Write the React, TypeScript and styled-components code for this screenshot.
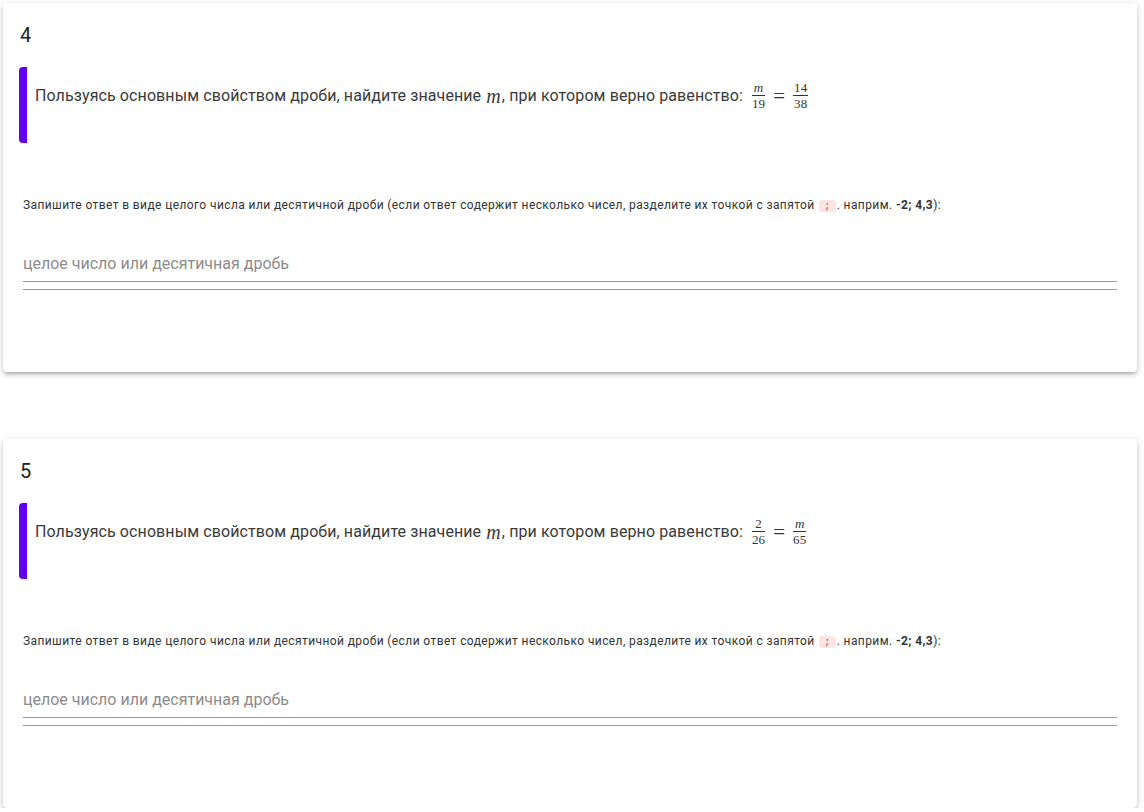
import React from "react";
import styled, { createGlobalStyle } from "styled-components";

const Global = createGlobalStyle`
  html, body { margin: 0; padding: 0; background: #fff; }
  body { font-family: Roboto, "Noto Sans", Arial, sans-serif; }
`;

const Page = styled.div`
  display: flex;
  flex-direction: column;
  gap: 67px;
  padding: 3px 7px 0 3px;
`;

const Card = styled.section`
  background: #fff;
  border-radius: 4px;
  box-shadow: 0 3px 3px -2px rgba(0,0,0,0.2), 0 3px 4px 0 rgba(0,0,0,0.14), 0 1px 8px 0 rgba(0,0,0,0.12);
  height: 369px;
  box-sizing: border-box;
  padding: 20px 20px 0 16px;
  display: flex;
  flex-direction: column;
`;

const Num = styled.div`
  font-size: 20px;
  line-height: 24px;
  color: #212121;
  padding-left: 1px;
`;

const Statement = styled.div`
  margin-top: 20px;
  border-left: 8px solid #6200ea;
  border-radius: 4px;
  height: 76px;
  box-sizing: border-box;
  padding: 15px 0 0 8px;
  font-size: 16px;
  line-height: 28px;
  letter-spacing: 0.1px;
  color: #3a3a3a;
  display: flex;
  align-self: flex-start;
  align-items: flex-start;
`;

const MathVar = styled.span`
  font-family: "Liberation Serif", "DejaVu Serif", serif;
  font-style: italic;
  font-size: 20px;
  margin: 0 1px;
`;

const MathBox = styled.span`
  display: inline-flex;
  align-items: center;
  margin-left: 8px;
  font-family: "Liberation Serif", "DejaVu Serif", serif;
  color: #333;
  height: 28px;
`;

const Frac = styled.span`
  display: inline-flex;
  flex-direction: column;
  align-items: center;
  font-size: 13px;
  line-height: 12px;
  padding: 0 1px;
`;

const FracTop = styled.span<{ $italic?: boolean }>`
  font-style: ${(p) => (p.$italic ? "italic" : "normal")};
  padding: 0 1px 1px;
  align-self: stretch;
  text-align: center;
  border-bottom: 1px solid #333;
`;

const FracBottom = styled.span`
  padding-top: 2px;
`;

const Eq = styled.span`
  font-size: 21px;
  margin: 0 7px;
  line-height: 1;
`;

const Hint = styled.div`
  margin-top: 54px;
  padding-left: 4px;
  font-size: 12px;
  line-height: 16px;
  color: #333;
  letter-spacing: 0.4px;
`;

const Code = styled.code`
  font-family: "Liberation Mono", monospace;
  font-size: 11px;
  letter-spacing: 0;
  background: #fde4e4;
  color: #c0504d;
  border-radius: 3px;
  padding: 0 5px;
  margin: 0 1px;
`;

const Field = styled.div`
  margin-top: 39px;
  margin-left: 4px;
  display: flex;
  flex-direction: column;
`;

const Input = styled.input`
  border: none;
  border-bottom: 1px solid #9a9a9a;
  outline: none;
  font-family: Roboto, sans-serif;
  font-size: 16px;
  padding: 1px 0 8px;
  background: transparent;
  color: #333;
  &::placeholder { color: #8c8c8c; }
`;

const Underline = styled.div`
  margin-top: 7px;
  border-top: 1px solid #9a9a9a;
`;

type Q = { n: number; math: React.ReactNode };

const Fraction = ({ top, bottom, italic }: { top: string; bottom: string; italic?: boolean }) => (
  <Frac>
    <FracTop $italic={italic}>{top}</FracTop>
    <FracBottom>{bottom}</FracBottom>
  </Frac>
);

const questions: Q[] = [
  {
    n: 4,
    math: (
      <>
        <Fraction top="m" bottom="19" italic />
        <Eq>=</Eq>
        <Fraction top="14" bottom="38" />
      </>
    ),
  },
  {
    n: 5,
    math: (
      <>
        <Fraction top="2" bottom="26" />
        <Eq>=</Eq>
        <Fraction top="m" bottom="65" italic />
      </>
    ),
  },
];

export default function App() {
  return (
    <>
      <Global />
      <Page>
        {questions.map((q) => (
          <Card key={q.n}>
            <Num>{q.n}</Num>
            <Statement>
              Пользуясь основным свойством дроби, найдите значение&nbsp;<MathVar>m</MathVar>, при котором верно равенство:
              <MathBox>{q.math}</MathBox>
            </Statement>
            <Hint>
              Запишите ответ в виде целого числа или десятичной дроби (если ответ содержит несколько чисел, разделите их точкой с запятой <Code>;</Code>. наприм. <b>-2; 4,3</b>):
            </Hint>
            <Field>
              <Input placeholder="целое число или десятичная дробь" />
              <Underline />
            </Field>
          </Card>
        ))}
      </Page>
    </>
  );
}
